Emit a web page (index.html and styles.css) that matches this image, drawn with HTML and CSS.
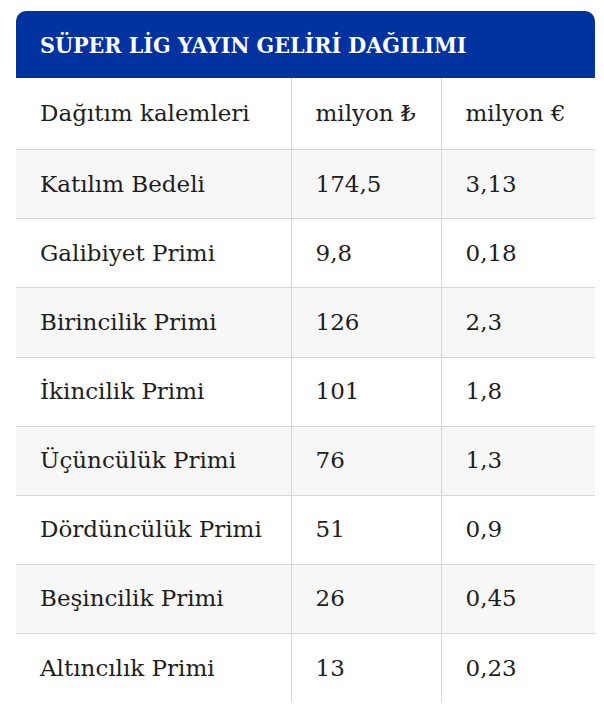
FILE: index.html
```html
<!DOCTYPE html>
<html lang="tr">
<head>
<meta charset="utf-8">
<title>Süper Lig Yayın Geliri Dağılımı</title>
<link rel="stylesheet" href="styles.css">
</head>
<body>
<div class="wrap">
  <div class="title">SÜPER LİG YAYIN GELİRİ DAĞILIMI</div>
  <table class="tbl">
    <colgroup>
      <col class="c1"><col class="c2"><col class="c3">
    </colgroup>
    <thead>
      <tr><th>Dağıtım kalemleri</th><th>milyon ₺</th><th>milyon €</th></tr>
    </thead>
    <tbody>
      <tr><td>Katılım Bedeli</td><td>174,5</td><td>3,13</td></tr>
      <tr><td>Galibiyet Primi</td><td>9,8</td><td>0,18</td></tr>
      <tr><td>Birincilik Primi</td><td>126</td><td>2,3</td></tr>
      <tr><td>İkincilik Primi</td><td>101</td><td>1,8</td></tr>
      <tr><td>Üçüncülük Primi</td><td>76</td><td>1,3</td></tr>
      <tr><td>Dördüncülük Primi</td><td>51</td><td>0,9</td></tr>
      <tr><td>Beşincilik Primi</td><td>26</td><td>0,45</td></tr>
      <tr><td>Altıncılık Primi</td><td>13</td><td>0,23</td></tr>
    </tbody>
  </table>
</div>
</body>
</html>
```
FILE: styles.css
```css
html, body {
  margin: 0;
  padding: 0;
  background: #ffffff;
}
body {
  font-family: "DejaVu Serif", "Liberation Serif", serif;
  color: #1e1e1e;
}
.wrap {
  margin: 11px 9px 0 16px;
}
.title {
  background: #0033a0;
  color: #ffffff;
  border-radius: 10px 10px 0 0;
  height: 67px;
  box-sizing: border-box;
  padding: 0 24px;
  display: flex;
  align-items: center;
  font-weight: bold;
  font-size: 23px;
  font-stretch: condensed;
}
.tbl {
  width: 100%;
  border-collapse: collapse;
  table-layout: fixed;
  font-size: 23px;
}
.c1 { width: 275px; }
.c2 { width: 150px; }
.tbl th, .tbl td {
  text-align: left;
  font-weight: normal;
  padding: 17.5px 24px;
  line-height: 33.14px;
  border-left: 1px solid #d7d7d7;
  border-bottom: 1px solid #d7d7d7;
  white-space: nowrap;
}
.tbl th {
  padding: 19px 24px;
}
.tbl th:first-child, .tbl td:first-child {
  border-left: none;
}
.tbl tbody tr:nth-child(odd) {
  background: #f7f7f7;
}
.tbl tbody tr:last-child td {
  border-bottom: none;
}
```
